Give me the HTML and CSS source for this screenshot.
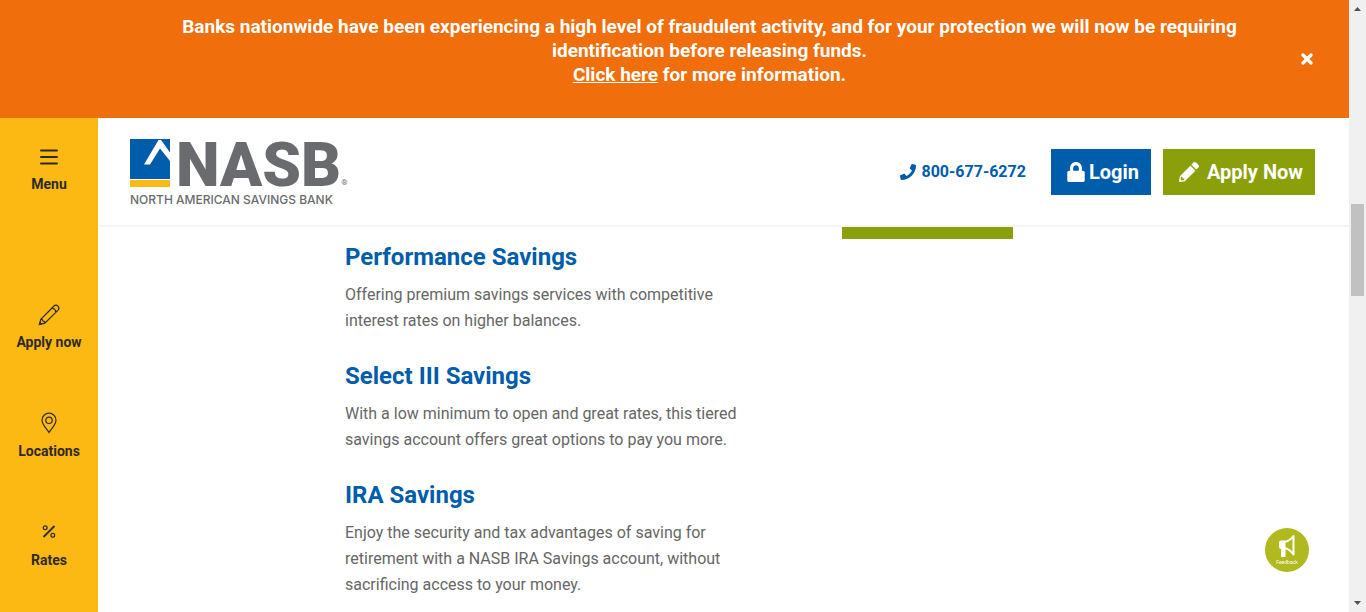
FILE: index.html
```html
<!DOCTYPE html>
<html lang="en">
<head>
<meta charset="utf-8">
<title>Savings Accounts | NASB</title>
<link rel="stylesheet" href="styles.css">
</head>
<body>
<div class="page">
  <div class="alert">
    <p class="alert-text">Banks nationwide have been experiencing a high level of fraudulent activity, and for your protection we will now be requiring identification before releasing funds.<br><a href="#more">Click here</a> for more information.</p>
    <button class="alert-close" type="button" aria-label="Close">
      <svg width="12" height="12" viewBox="0 0 12 12"><path d="M2 2l8 8M10 2l-8 8" stroke="currentColor" stroke-width="3.2" stroke-linecap="round"/></svg>
    </button>
  </div>
  <div class="shell">
    <nav class="rail">
      <button class="rail-item rail-menu" type="button">
        <svg class="rail-icon" viewBox="0 0 24 24"><path d="M4 5.500h16M4 12h16M4 18.500h16" stroke-width="2" stroke-linecap="round"/></svg>
        <span>Menu</span>
      </button>
      <a class="rail-item" href="#apply">
        <svg class="rail-icon" viewBox="0 0 24 24"><path d="M2.500 21.500l1.300-5.200L17 3q2-1.800 4 .1q1.800 2 .1 4L7.800 20.200zM3.800 16.300q1.600-.4 2.100 1.700q2.300.4 1.900 2.200M15 5q3.300 .7 4.100 4.100" /><path d="M2.500 21.500l.5-2 1.500 1.500z" fill="currentColor"/></svg>
        <span>Apply now</span>
      </a>
      <a class="rail-item" href="#locations">
        <svg class="rail-icon" viewBox="0 0 24 24"><path d="M12 20.500C9.500 16.500 5 12.500 5 8.200a7 7 0 0 1 14 0c0 4.300-4.500 8.300-7 12.300z"/><circle cx="12" cy="8.300" r="3.200"/></svg>
        <span>Locations</span>
      </a>
      <a class="rail-item" href="#rates">
        <svg class="rail-icon" viewBox="0 0 24 24"><path d="M6.500 16L17.500 5" stroke-width="1.800"/><circle cx="8.200" cy="6.700" r="1.900"/><circle cx="15.800" cy="14.300" r="1.900"/></svg>
        <span>Rates</span>
      </a>
    </nav>
    <div class="content">
      <header class="header">
        <a class="logo" href="#home">
          <span class="logo-top">
            <svg width="40" height="48" viewBox="0 0 40 48"><path fill="#005dab" d="M0 0h40v40H0z"/><path fill="#fdb913" d="M0 41h40v7H0z"/><path fill="#fff" d="M28.500 1h2.500L40 13.500V22L30 9.500 20 25.500h-6z"/></svg>
            <span class="logo-name">NASB</span><span class="logo-mark">®</span>
          </span>
          <span class="logo-tag">NORTH AMERICAN SAVINGS BANK</span>
        </a>
        <div class="actions">
          <a class="phone" href="tel:8006776272">
            <svg width="16" height="16" viewBox="0 0 512 512"><path fill="currentColor" d="M493.400 24.600l-104-24c-11.300-2.600-22.900 3.300-27.500 13.900l-48 112c-4.200 9.800-1.400 21.300 6.900 28l60.600 49.600c-36 76.700-98.900 140.500-177.200 177.200l-49.600-60.600c-6.800-8.300-18.200-11.100-28-6.900l-112 48C3.900 366.500-2 378.100.6 389.400l24 104C27.100 504.200 36.700 512 48 512c256.100 0 464-207.500 464-464 0-11.200-7.700-20.900-18.600-23.400z"/></svg>
            800-677-6272</a>
          <a class="btn btn-login" href="#login">
            <svg width="18" height="20" viewBox="0 0 448 512"><path fill="currentColor" d="M400 224h-24v-72C376 68.200 307.800 0 224 0S72 68.200 72 152v72H48c-26.500 0-48 21.500-48 48v192c0 26.500 21.500 48 48 48h352c26.500 0 48-21.500 48-48V272c0-26.500-21.500-48-48-48zm-104 0H152v-72c0-39.700 32.300-72 72-72s72 32.300 72 72v72z"/></svg>
            Login</a>
          <a class="btn btn-apply" href="#apply">
            <svg width="20" height="20" viewBox="0 0 512 512"><path fill="currentColor" d="M497.900 142.100l-46.100 46.100c-4.700 4.700-12.300 4.700-17 0l-111-111c-4.700-4.700-4.700-12.300 0-17l46.100-46.100c18.700-18.700 49.100-18.700 67.900 0l60.100 60.100c18.800 18.700 18.800 49.100 0 67.900zM284.200 99.800L21.600 362.400.4 483.900c-2.900 16.400 11.400 30.600 27.800 27.800l121.500-21.300 262.600-262.600c4.700-4.700 4.700-12.300 0-17l-111-111c-4.800-4.700-12.400-4.700-17.100 0zM88 424h48v36.300l-64.500 11.300-31.100-31.100L51.700 376H88v48z"/></svg>
            Apply Now</a>
        </div>
      </header>
      <main class="main">
        <div class="accounts">
          <section class="account">
            <h2>Performance Savings</h2>
            <p>Offering premium savings services with competitive interest rates on higher balances.</p>
          </section>
          <section class="account">
            <h2>Select III Savings</h2>
            <p>With a low minimum to open and great rates, this tiered savings account offers great options to pay you more.</p>
          </section>
          <section class="account">
            <h2>IRA Savings</h2>
            <p>Enjoy the security and tax advantages of saving for retirement with a NASB IRA Savings account, without sacrificing access to your money.</p>
          </section>
        </div>
        <div class="cta-edge"></div>
      </main>
    </div>
  </div>
</div>
<div class="scrollbar">
  <svg width="17" height="17" viewBox="0 0 17 17"><path fill="#505050" d="M5 11l3.500-4 3.500 4z"/></svg>
  <div class="scroll-track"><div class="scroll-thumb"></div></div>
  <svg width="17" height="17" viewBox="0 0 17 17"><path fill="#505050" d="M5 6l3.500 4L12 6z"/></svg>
</div>
<button class="feedback" type="button">
  <svg width="18" height="24" viewBox="0 0 18 24"><path fill="none" stroke="#fff" stroke-width="2" stroke-linejoin="round" d="M6 8C10 7.500 13 5.500 15.500 2v18.500C13 17 10 14.500 6 14z"/><path fill="#fff" d="M3 6.500h4.500V23H3v-8Q1 15 1 13V8.500q0-2 2-2z"/></svg>
  <span>Feedback</span>
</button>
</body>
</html>
```
FILE: styles.css
```css
* { box-sizing: border-box; }

body {
  margin: 0;
  height: 100vh;
  display: flex;
  overflow: hidden;
  background: #fff;
  color: #666;
  font-family: Roboto, "Liberation Sans", sans-serif;
  font-size: 16px;
}

h2, p { margin: 0; }
a { text-decoration: none; }
button { border: 0; padding: 0; background: none; font: inherit; cursor: pointer; }

.page { flex: 1; min-width: 0; display: flex; flex-direction: column; }

.alert {
  display: flex;
  align-items: center;
  padding: 0 36px 0 106px;
  background: #f06e0c;
  color: #fff;
}
.alert-text {
  flex: 1;
  padding: 15px 36px 31px 48px;
  text-align: center;
  font-size: 19px;
  font-weight: 700;
  line-height: 24px;
}
.alert-text a { color: inherit; text-decoration: underline; }
.alert-close { display: flex; color: #fff; }

.shell { flex: 1; min-height: 0; display: flex; }

.rail {
  flex: 0 0 98px;
  display: flex;
  flex-direction: column;
  gap: 60px;
  padding-top: 27px;
  background: #fdb913;
}
.rail-item {
  display: flex;
  flex-direction: column;
  align-items: center;
  gap: 5px;
  color: #2d2a26;
  font-size: 14px;
  font-weight: 700;
  line-height: 20px;
}
.rail-menu { margin-bottom: 49px; }
.rail-icon {
  width: 24px;
  height: 24px;
  fill: none;
  stroke: currentColor;
  stroke-width: 1.2;
}

.content { flex: 1; min-width: 0; display: flex; flex-direction: column; }

.header {
  display: flex;
  justify-content: space-between;
  align-items: center;
  padding: 21px 34px 17px 32px;
  border-bottom: 2px solid #f5f5f5;
}
.logo { display: flex; flex-direction: column; gap: 5px; color: #6a6b6e; }
.logo-top { display: flex; align-items: flex-end; }
.logo-name {
  margin-left: 6px;
  font-size: 62px;
  font-weight: 900;
  line-height: 44px;
}
.logo-mark { font-size: 8px; line-height: 8px; }
.logo-tag {
  font-family: Inter, sans-serif;
  font-size: 12px;
  font-weight: 500;
  line-height: 16px;
}

.actions { display: flex; align-items: center; gap: 12px; padding-bottom: 4px; }
.phone {
  display: flex;
  align-items: center;
  gap: 6px;
  margin-right: 13px;
  color: #005dab;
  font-weight: 700;
}
.btn {
  display: flex;
  align-items: center;
  padding: 11px 12px 11px 16px;
  color: #fff;
  font-size: 20px;
  font-weight: 700;
  line-height: 24px;
}
.btn-login { gap: 4px; background: #005dab; }
.btn-apply { gap: 8px; background: #8a9f0a; }

.main {
  flex: 1;
  min-height: 0;
  display: flex;
  align-items: flex-start;
  gap: 97px;
  padding-left: 247px;
}
.accounts {
  flex: 0 0 400px;
  display: flex;
  flex-direction: column;
  gap: 27px;
  padding-top: 15px;
}
.account { display: flex; flex-direction: column; gap: 10px; }
.account h2 { color: #005dab; font-size: 24px; font-weight: 700; line-height: 30px; }
.account p { line-height: 26px; }
.cta-edge { width: 171px; height: 12px; background: #8a9f0a; }

.scrollbar { flex: 0 0 17px; display: flex; flex-direction: column; background: #f0f0f0; }
.scroll-track { flex: 1; padding: 187px 2px 0; }
.scroll-thumb { height: 92px; background: #c1c1c1; }

.feedback {
  position: fixed;
  right: 57px;
  bottom: 40px;
  width: 44px;
  height: 44px;
  display: flex;
  flex-direction: column;
  align-items: center;
  justify-content: center;
  border-radius: 50%;
  background: #b0ba1e;
  color: #fff;
  font-size: 5px;
  line-height: 8px;
}
```
